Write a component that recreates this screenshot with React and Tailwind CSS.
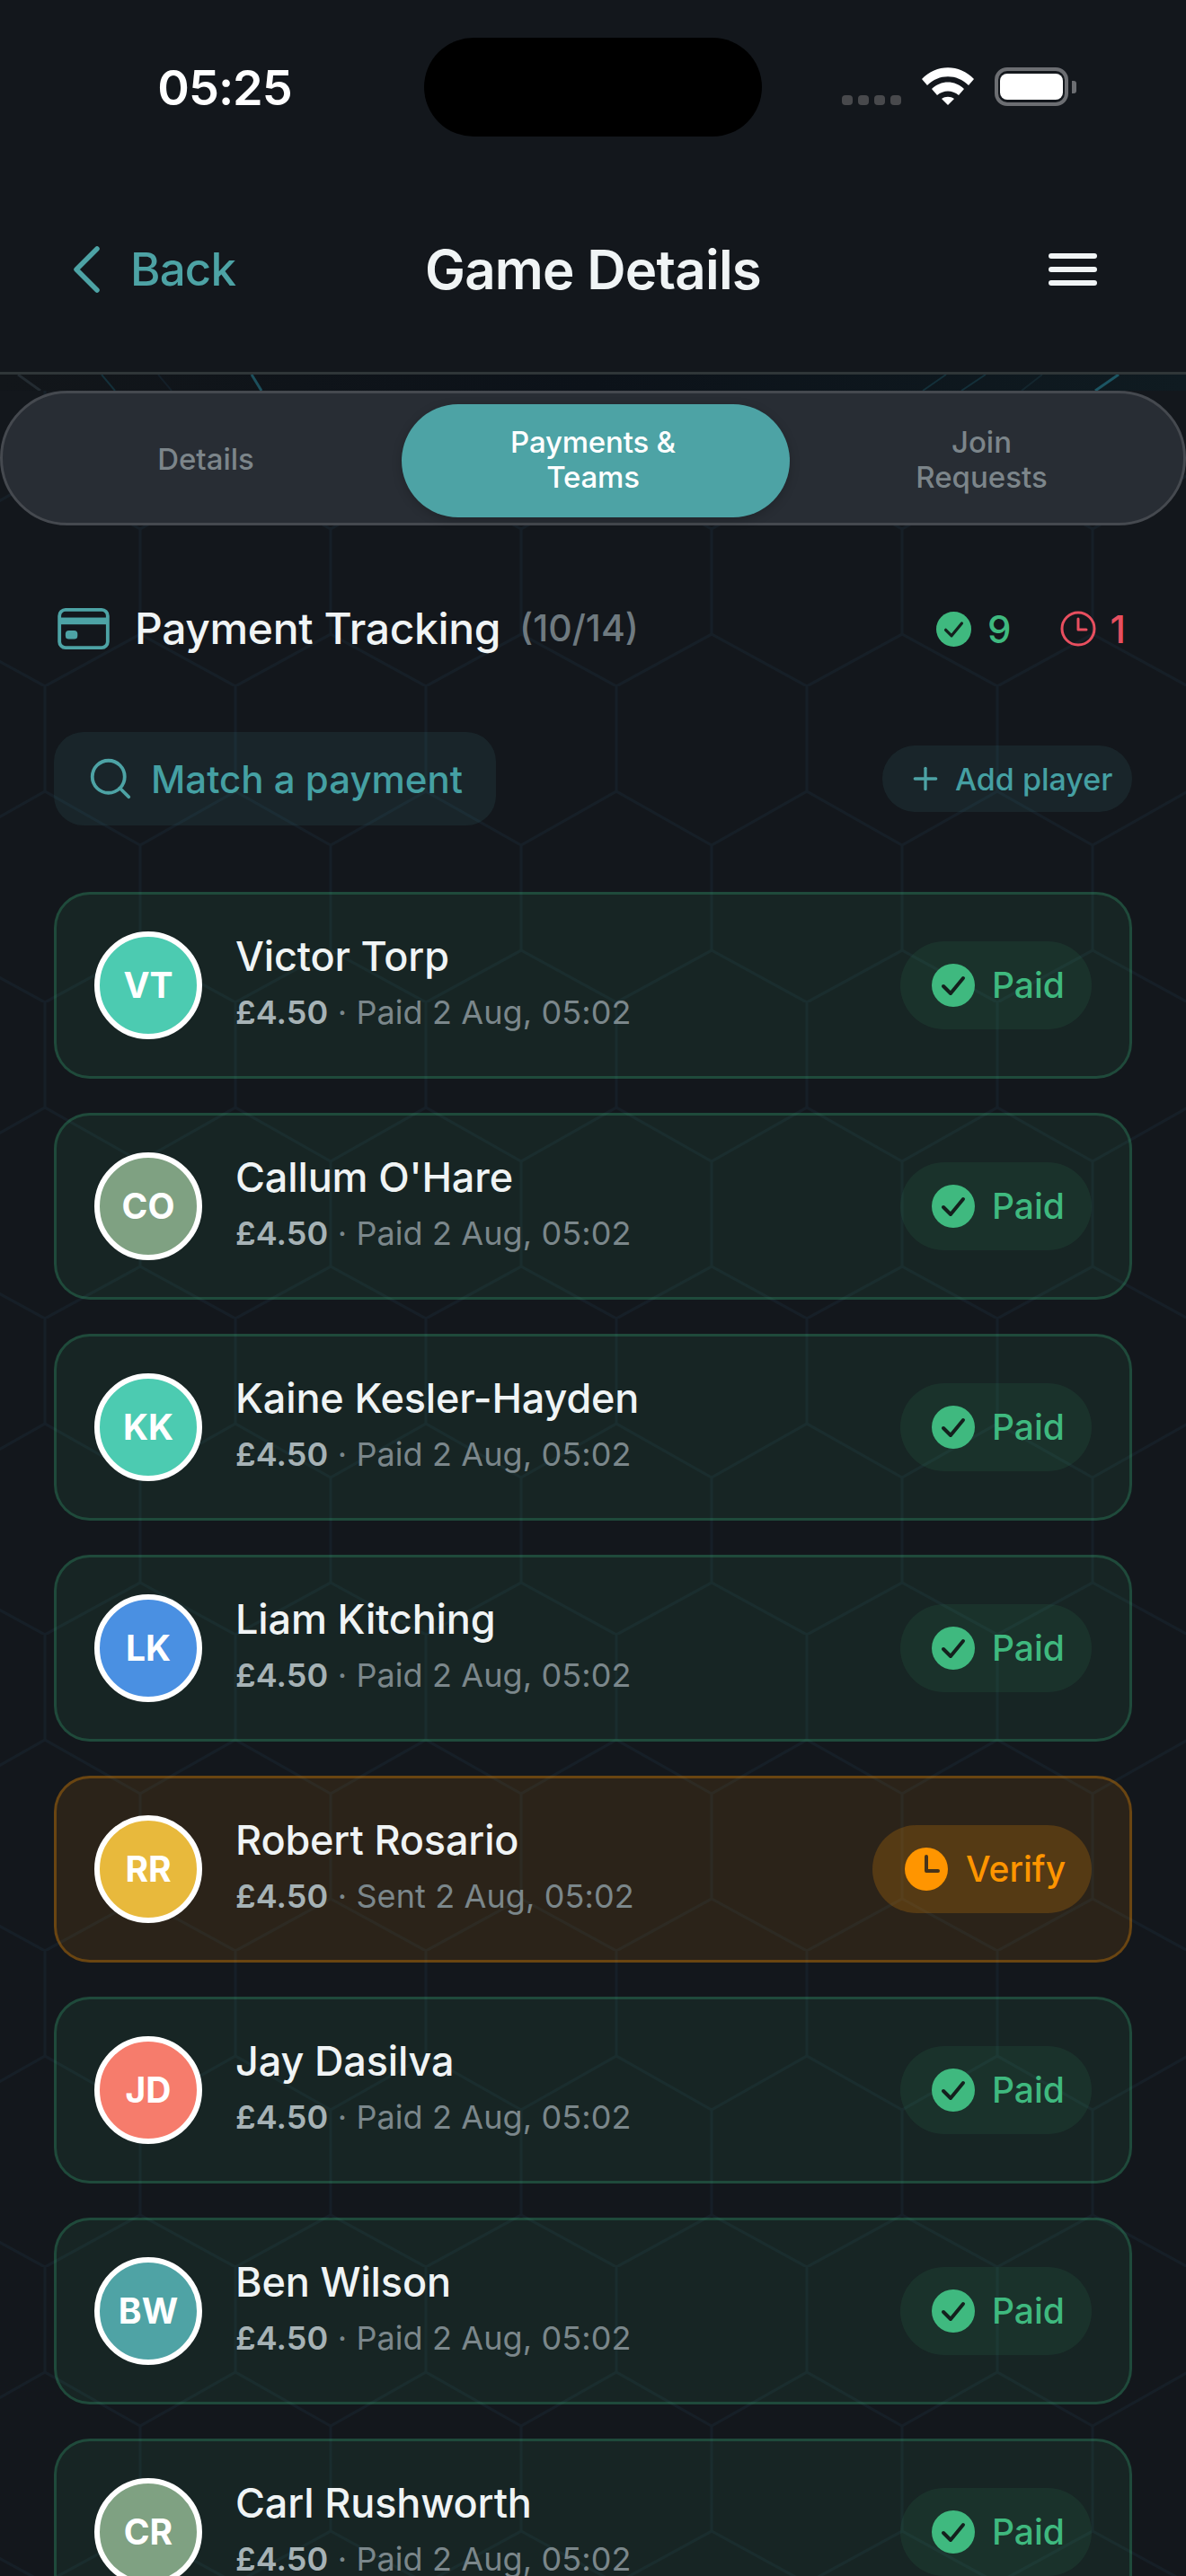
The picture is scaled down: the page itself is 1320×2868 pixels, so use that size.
import React from "react";
import { Plus, Search } from "lucide-react";

const players = [
  { initials: "VT", name: "Victor Torp", color: "bg-[#4ccbb1]" },
  { initials: "CO", name: "Callum O'Hare", color: "bg-[#7fa182]" },
  { initials: "KK", name: "Kaine Kesler-Hayden", color: "bg-[#4ccbb1]" },
  { initials: "LK", name: "Liam Kitching", color: "bg-[#4a90e2]" },
  { initials: "RR", name: "Robert Rosario", color: "bg-[#e8b93c]", pending: true },
  { initials: "JD", name: "Jay Dasilva", color: "bg-[#f67c6c]" },
  { initials: "BW", name: "Ben Wilson", color: "bg-[#4fa3a5]" },
  { initials: "CR", name: "Carl Rushworth", color: "bg-[#7fa182]" },
];

const HexBackground = () => (
  <svg className="absolute inset-0 h-full w-full" aria-hidden="true">
    <defs>
      <pattern
        id="hex"
        width="212"
        height="352"
        patternUnits="userSpaceOnUse"
        patternTransform="translate(50 347)"
      >
        <path
          d="M0 0V117L106 177V294L0 352M106 177L212 117V0M106 294L212 352"
          fill="none"
          stroke="#161f27"
          strokeWidth="3"
        />
      </pattern>
    </defs>
    <rect width="100%" height="100%" fill="url(#hex)" />
  </svg>
);

const CheckDot = ({ size }) => (
  <svg width={size} height={size} viewBox="0 0 48 48" className="shrink-0">
    <circle cx="24" cy="24" r="24" fill="#3fb97f" />
    <path d="M13 25l8 8 14-17" fill="none" stroke="#14201d" strokeWidth="4" strokeLinecap="round" strokeLinejoin="round" />
  </svg>
);

const PlayerCard = ({ player }) => {
  const pending = player.pending;
  return (
    <div
      className={`flex h-[208px] shrink-0 items-center rounded-[40px] border-[3px] px-[42px] ${
        pending ? "border-[#ff9500]/30 bg-[#ff9500]/10" : "border-[#3dba7f]/25 bg-[#3dba7f]/[0.09]"
      }`}
    >
      <div
        className={`flex h-[120px] w-[120px] shrink-0 items-center justify-center rounded-full border-[6px] border-white text-[39px] font-bold text-white ${player.color}`}
      >
        {player.initials}
      </div>
      <div className="ml-[37px] flex-1 pb-[3px]">
        <div className="text-[45px] leading-[62px] font-medium tracking-[-0.15px] text-[#f0f4f5]">{player.name}</div>
        <div className="text-[36px] leading-[62px] tracking-[0.1px] text-[#7b878b]">
          <span className="font-semibold text-[#a6b2b5]">£4.50</span> · {pending ? "Sent" : "Paid"} 2 Aug, 05:02
        </div>
      </div>
      {pending ? (
        <div className="flex h-[98px] w-[244px] items-center gap-[20px] rounded-full bg-[#ff9500]/20 pl-[36px] text-[39px] font-medium text-[#ff9500]">
          <svg width="48" height="48" viewBox="0 0 48 48" className="shrink-0">
            <circle cx="24" cy="24" r="24" fill="#ff9500" />
            <path d="M24 10v16h13" fill="none" stroke="#47331a" strokeWidth="4" strokeLinecap="round" strokeLinejoin="round" />
          </svg>
          Verify
        </div>
      ) : (
        <div className="flex h-[98px] w-[213px] items-center gap-[19px] rounded-full bg-[#3dba7f]/[0.09] pl-[35px] text-[39px] font-medium text-[#3fb97f]">
          <CheckDot size={48} />
          Paid
        </div>
      )}
    </div>
  );
};

export default function App() {
  return (
    <div className="flex h-[2868px] flex-col overflow-hidden bg-[#13171c] font-['Inter',sans-serif]">
      <header className="relative z-10 h-[417px] shrink-0 border-b-[3px] border-[#2f3638] bg-[#13171c]">
        <div className="flex pt-[42px]">
          <div className="flex h-[110px] w-[472px] items-center justify-center pl-[28px] text-[54px] font-semibold tracking-[-1px] text-white">
            05:25
          </div>
          <div className="h-[110px] w-[376px] rounded-[55px] bg-black" />
          <div className="flex h-[110px] flex-1 items-start pl-[89px] pt-[33px]">
            <div className="mt-[31px] flex gap-[6px]">
              <span className="h-[11px] w-[12px] rounded-[4px] bg-[#48494c]" />
              <span className="h-[11px] w-[12px] rounded-[4px] bg-[#48494c]" />
              <span className="h-[11px] w-[12px] rounded-[4px] bg-[#48494c]" />
              <span className="h-[11px] w-[12px] rounded-[4px] bg-[#48494c]" />
            </div>
            <svg width="58" height="42" viewBox="0 0 58 42" className="ml-[23px]">
              <path d="M0 13C16-4 42-4 58 13l-6 7C39 7 19 7 6 20z" fill="#fff" />
              <path d="M11 24c10-10 26-10 36 0l-6 7c-7-6-17-6-24 0z" fill="#fff" />
              <path d="M22 35c4-3 10-3 14 0l-7 7z" fill="#fff" />
            </svg>
            <div className="ml-[23px] flex items-center">
              <div className="flex h-[43px] w-[82px] items-center justify-center rounded-[14px] border-[4px] border-[#6c6e72]">
                <div className="h-[29px] w-[70px] rounded-[8px] bg-white" />
              </div>
              <div className="ml-[4px] h-[14px] w-[5px] rounded-r-[3px] bg-[#6c6e72]" />
            </div>
          </div>
        </div>
        <div className="relative mt-[93px] flex h-[110px] items-center justify-center">
          <div className="absolute left-[80px] top-0 flex h-full items-center text-[#4da3a5]">
            <svg width="32" height="54" viewBox="0 0 32 54">
              <path d="M28 4L5 27l23 23" fill="none" stroke="#4da3a5" strokeWidth="5.5" strokeLinecap="round" strokeLinejoin="round" />
            </svg>
            <span className="ml-[33px] text-[51px] font-medium tracking-[-0.8px]">Back</span>
          </div>
          <h1 className="text-[60px] font-semibold tracking-[-0.75px] text-[#f0f4f5]">Game Details</h1>
          <div className="absolute right-[99px] top-[37px] flex flex-col gap-[9px]">
            <span className="h-[6px] w-[54px] rounded-full bg-[#f0f4f5]" />
            <span className="h-[6px] w-[54px] rounded-full bg-[#f0f4f5]" />
            <span className="h-[6px] w-[54px] rounded-full bg-[#f0f4f5]" />
          </div>
        </div>
      </header>

      <div className="relative flex-1 overflow-hidden">
        <HexBackground />
        <div className="relative">
          {/* thin strip above the tabs, bits of the backdrop glow through */}
          <div className="relative h-[18px] bg-gradient-to-r from-[#12161a] via-[#0c1219] to-[#0f1b21]">
            <svg width="1320" height="18" className="absolute left-0 top-0">
              <path d="M20 0L45 18" stroke="#232b31" strokeWidth="3" />
              <path d="M113 0L128 18" stroke="#14303a" strokeWidth="2" />
              <path d="M176 0L191 18" stroke="#141f28" strokeWidth="2" />
              <path d="M280 0L291 18" stroke="#1c4f5c" strokeWidth="3" />
              <path d="M1053 0L1027 18" stroke="#14303a" strokeWidth="2" />
              <path d="M1097 0L1070 18" stroke="#14303a" strokeWidth="2" />
              <path d="M1160 0L1137 18" stroke="#14262e" strokeWidth="2" />
              <path d="M1245 0L1219 18" stroke="#1c5563" strokeWidth="3" />
            </svg>
          </div>

          <div className="flex h-[150px] items-center rounded-full border-[3px] border-[#45494f] bg-[#282d34] px-[1px] pt-[6px]">
            <div className="w-[443px] pb-[3px] pl-[7px] text-center text-[33px] leading-[39px] font-medium text-[#7c858a]">Details</div>
            <div className="flex h-[126px] w-[432px] items-center justify-center rounded-full bg-[#4da3a5] pr-[6px] pb-[3px] text-center text-[33px] leading-[39px] font-medium tracking-[-0.2px] text-white shadow-[0_3px_12px_rgba(0,0,0,0.2)]">
              Payments &<br />Teams
            </div>
            <div className="flex-1 pr-[10px] pb-[3px] text-center text-[33px] leading-[39px] font-medium text-[#7c858a]">
              Join<br />Requests
            </div>
          </div>

          <div className="mt-[84px] flex h-[62px] items-center pl-[64px] pr-[67px]">
            <svg width="58" height="46" viewBox="0 0 60 48" className="shrink-0">
              <rect x="2" y="2" width="56" height="44" rx="7" fill="none" stroke="#4da3a5" strokeWidth="4" />
              <rect x="2" y="11" width="56" height="8" fill="#4da3a5" />
              <rect x="9" y="26" width="14" height="10" rx="4" fill="#4da3a5" />
            </svg>
            <span className="ml-[28px] text-[48px] font-medium tracking-[-0.37px] text-[#f0f4f5]">Payment Tracking</span>
            <span className="ml-[21px] text-[41px] font-medium text-[#6f7a80]">(10/14)</span>
            <div className="ml-auto flex items-center text-[42px] font-medium">
              <CheckDot size={39} />
              <span className="ml-[18px] text-[#3fb97f]">9</span>
              <svg width="40" height="40" viewBox="0 0 40 40" className="ml-[54px] shrink-0">
                <circle cx="20" cy="20" r="18" fill="none" stroke="#e84f5f" strokeWidth="3" />
                <path d="M20 9v12h9" fill="none" stroke="#e84f5f" strokeWidth="3" strokeLinecap="round" strokeLinejoin="round" />
              </svg>
              <span className="ml-[16px] text-[#e84f5f]">1</span>
            </div>
          </div>

          <div className="mt-[84px] flex items-center justify-between px-[60px]">
            <div className="flex h-[104px] w-[492px] items-center rounded-[33px] bg-[#4da3a5]/10 pl-[36px]">
              <Search size={54} strokeWidth={1.7} className="text-[#4da3a5]" />
              <span className="ml-[18px] text-[42px] font-medium text-[#45a0a3]">Match a payment</span>
            </div>
            <div className="flex h-[74px] w-[278px] items-center rounded-full bg-[#4da3a5]/10 pl-[28px]">
              <Plus size={40} strokeWidth={2} className="text-[#4da3a5]" />
              <span className="ml-[13px] text-[34px] font-medium text-[#45a0a3]">Add player</span>
            </div>
          </div>

          <div className="mt-[74px] flex flex-col gap-[38px] px-[60px]">
            {players.map((player) => (
              <PlayerCard key={player.initials} player={player} />
            ))}
          </div>
        </div>
      </div>
    </div>
  );
}
